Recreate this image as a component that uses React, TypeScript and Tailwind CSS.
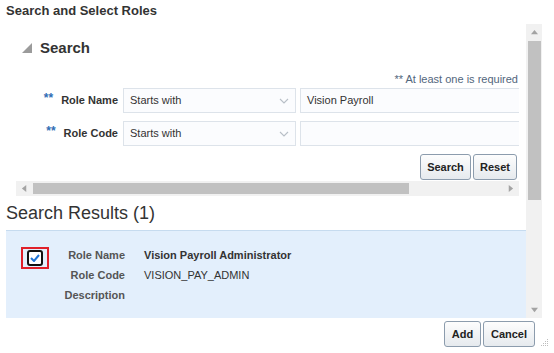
import React from 'react';

const font = { fontFamily: '"Liberation Sans", Arial, sans-serif' };

const Btn = ({ label, w }: { label: string; w: string }) => (
  <button
    className={`${w} h-[26px] rounded-[3px] border border-[#8c9cad] bg-gradient-to-b from-[#fdfdfd] to-[#e6eaee] text-[11px] font-bold text-[#222] leading-none`}
  >
    {label}
  </button>
);

const Chevron = () => (
  <svg width="10" height="6" viewBox="0 0 10 6" className="shrink-0">
    <path d="M1 1l4 4 4-4" fill="none" stroke="#b8bfc7" strokeWidth="1.1" />
  </svg>
);

const FormRow = ({ label, value }: { label: string; value: string }) => (
  <div className="flex items-center h-[25px]">
    <div className="w-[102px] shrink-0 flex justify-end items-center gap-[8px]">
      <span className="text-[#2f6db5] text-[12px] font-bold leading-none -mt-[5px]">**</span>
      <span className="text-[11px] font-bold text-[#333]">{label}</span>
    </div>
    <div className="ml-[5px] w-[173px] shrink-0 h-[25px] bg-[#fbfcfe] border border-[#dde3ea] flex items-center justify-between pl-[6px] pr-[6px]">
      <span className="text-[11px] text-[#333]">Starts with</span>
      <Chevron />
    </div>
    <div className="ml-[4px] w-[240px] shrink-0 h-[25px] bg-[#fbfcfe] border border-[#dde3ea] flex items-center pl-[6px]">
      <span className="text-[11px] text-[#333]">{value}</span>
    </div>
  </div>
);

const Tri = ({ d }: { d: string }) => (
  <svg width="7" height="7" viewBox="0 0 8 8">
    <path d={d} fill="#a3a3a3" />
  </svg>
);

export default function App() {
  return (
    <div style={font} className="relative w-[554px] h-[353px] overflow-hidden bg-white text-[#333]">
      <div className="h-[24px] pl-[6px] pt-[3px] text-[13px] font-bold leading-[16px] text-[#333]">
        Search and Select Roles
      </div>

      <div className="flex h-[294px]">
        {/* scrolling content */}
        <div className="w-[526px] pl-[6px] overflow-hidden flex flex-col">
          <div className="ml-[10px] w-[503px] flex flex-col">
            <div className="mt-[14px] h-[20px] flex items-center">
              <svg width="10" height="10" viewBox="0 0 10 10" className="ml-[6px]">
                <path d="M10 0L10 10L0 10Z" fill="#9b9b9b" />
              </svg>
              <span className="ml-[8px] text-[15px] font-bold text-[#333]">Search</span>
            </div>
            <div className="mt-[14px] h-[14px] pr-[1px] text-right text-[11px] leading-[14px] text-[#52667c]">
              ** At least one is required
            </div>
            <div className="mt-[2px] overflow-hidden">
              <FormRow label="Role Name" value="Vision Payroll" />
              <div className="h-[8px]" />
              <FormRow label="Role Code" value="" />
            </div>
            <div className="mt-[8px] flex justify-end gap-[2px] pr-[2px]">
              <Btn label="Search" w="w-[51px]" />
              <Btn label="Reset" w="w-[44px]" />
            </div>
            {/* horizontal scrollbar */}
            <div className="mt-[1px] h-[15px] bg-[#f1f1f1] flex items-center">
              <div className="w-[17px] flex justify-center">
                <Tri d="M6 0L6 8L1 4Z" />
              </div>
              <div className="w-[376px] h-[11px] bg-[#c1c1c1]" />
              <div className="flex-1" />
              <div className="w-[17px] flex justify-center">
                <Tri d="M2 0L2 8L7 4Z" />
              </div>
            </div>
          </div>

          <div className="mt-[6px] h-[22px] text-[18px] leading-[22px] text-[#333]">Search Results (1)</div>

          <div className="mt-[6px] w-[522px] h-[89px] bg-[#e3effc] border-t border-[#c6dbef] flex pt-[14px]">
            <div className="ml-[15px] mt-[2px] w-[28px] h-[22px] border-2 border-[#e0202a] flex items-center justify-center">
              <div className="w-[16px] h-[16px] rounded-[3px] border-2 border-[#111] bg-white flex items-center justify-center">
                <svg width="10" height="8" viewBox="0 0 10 8">
                  <path d="M1 4l3 3 5-6" fill="none" stroke="#1f74d6" strokeWidth="2" />
                </svg>
              </div>
            </div>
            <div className="w-[76px] flex flex-col items-end text-[11px] font-bold text-[#555] leading-[20px]">
              <span>Role Name</span>
              <span>Role Code</span>
              <span>Description</span>
            </div>
            <div className="ml-[19px] flex flex-col text-[11px] leading-[20px] text-[#333]">
              <span className="font-bold">Vision Payroll Administrator</span>
              <span>VISION_PAY_ADMIN</span>
              <span>&nbsp;</span>
            </div>
          </div>
        </div>

        {/* vertical scrollbar */}
        <div className="w-[16px] bg-[#f1f1f1] flex flex-col items-center">
          <div className="h-[17px] flex items-center justify-center">
            <Tri d="M0 6L8 6L4 1Z" />
          </div>
          <div className="w-[13px] h-[159px] bg-[#c1c1c1]" />
          <div className="flex-1" />
          <div className="h-[17px] flex items-center justify-center">
            <Tri d="M0 2L8 2L4 7Z" />
          </div>
        </div>
      </div>

      <div className="mt-[3px] flex justify-end gap-[2px] pr-[19px]">
        <Btn label="Add" w="w-[37px]" />
        <Btn label="Cancel" w="w-[52px]" />
      </div>

      <svg width="8" height="8" viewBox="0 0 8 8" className="absolute right-[5px] bottom-[6px]">
        <g fill="#bdbdbd">
          <rect x="6" y="0" width="1" height="1" />
          <rect x="4" y="2" width="1" height="1" />
          <rect x="6" y="2" width="1" height="1" />
          <rect x="2" y="4" width="1" height="1" />
          <rect x="4" y="4" width="1" height="1" />
          <rect x="6" y="4" width="1" height="1" />
          <rect x="0" y="6" width="1" height="1" />
          <rect x="2" y="6" width="1" height="1" />
          <rect x="4" y="6" width="1" height="1" />
          <rect x="6" y="6" width="1" height="1" />
        </g>
      </svg>
    </div>
  );
}
